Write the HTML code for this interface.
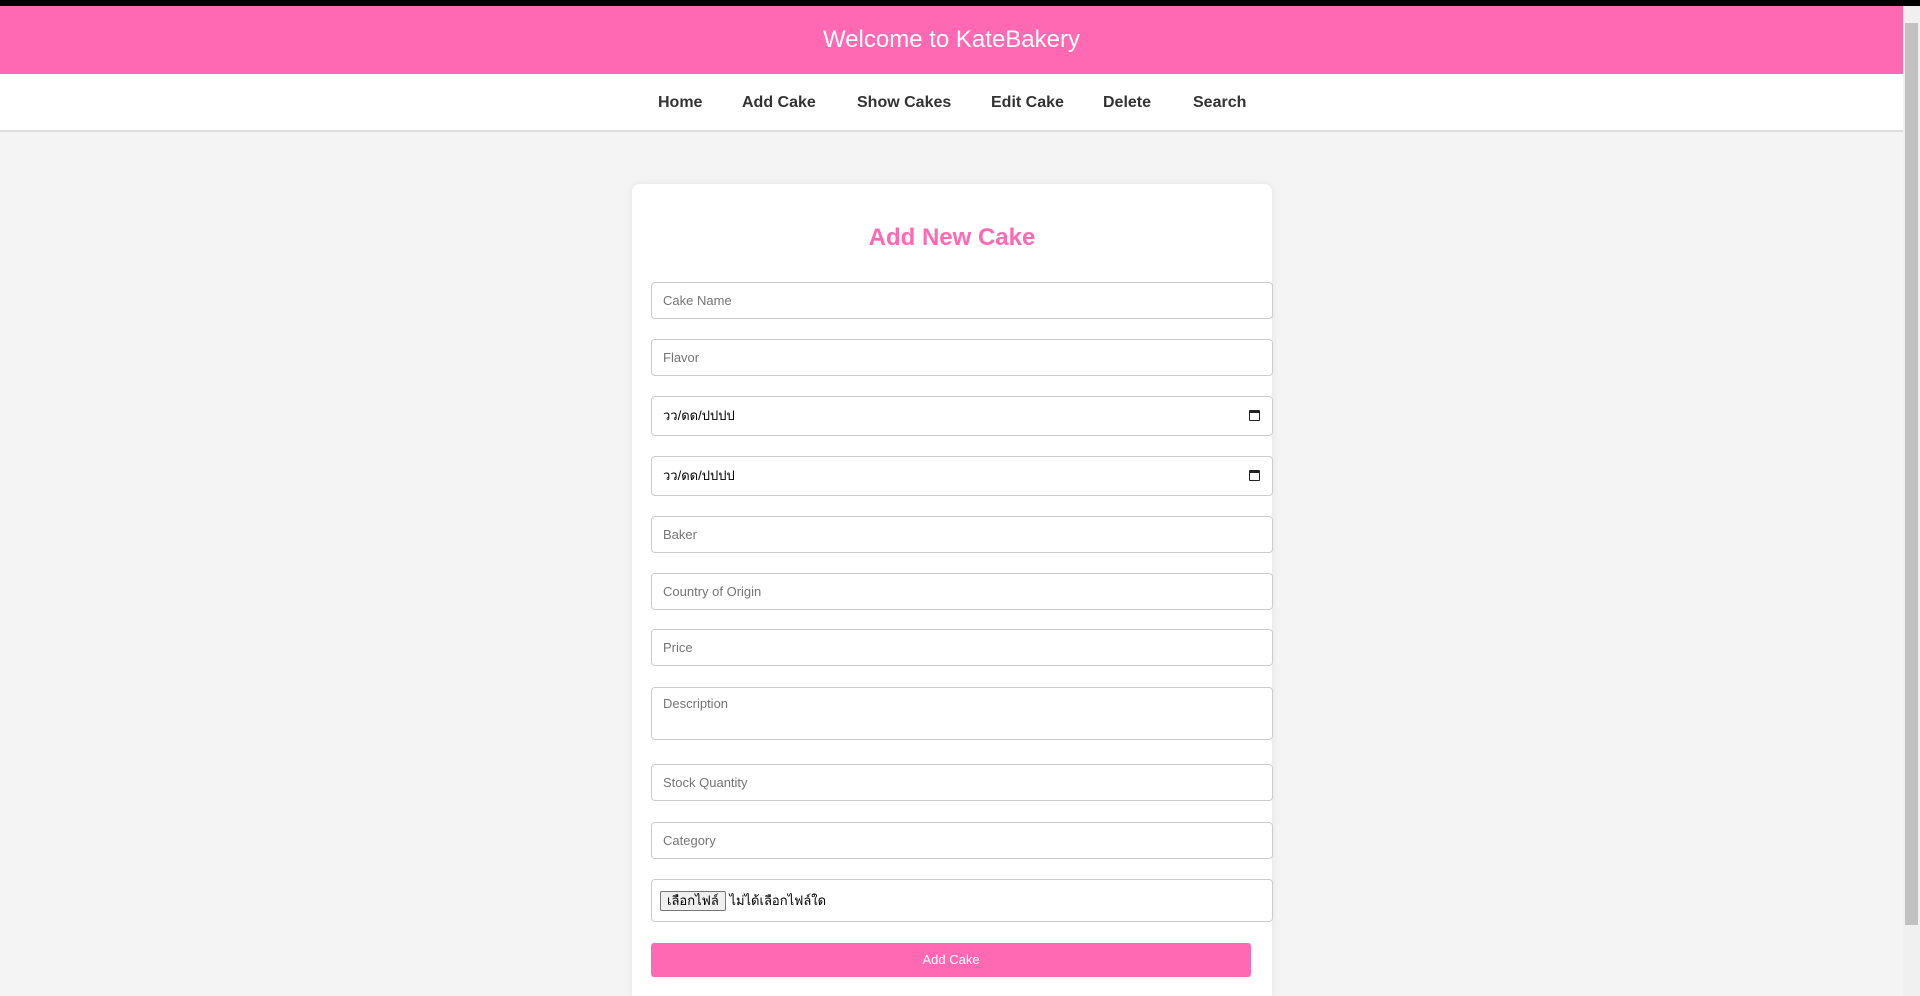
<!DOCTYPE html>
<html><head><meta charset="utf-8"><style>
*{box-sizing:border-box;margin:0;padding:0}
html{width:1920px;height:996px;overflow:hidden}
body{width:1920px;height:996px;overflow:hidden;background:#f4f4f4;font-family:"Liberation Sans",Arial,sans-serif;position:relative}
.black{position:absolute;left:0;top:0;width:1920px;height:6px;background:#000}
.hdr{position:absolute;left:0;top:6px;width:1903px;height:68px;background:#ff69b4;color:#fff;font-size:24px;text-align:center;line-height:68px}
.nav{position:absolute;left:0;top:74px;width:1903px;height:58px;background:#fff;border-bottom:2px solid #ddd}
.nav span{position:absolute;top:20px;font-size:16px;font-weight:bold;color:#333}
.card{position:absolute;left:632px;top:184px;width:640px;height:812px;background:#fff;border-radius:8px 8px 0 0;box-shadow:0 0 8px rgba(0,0,0,.08)}
h2{position:absolute;left:632px;width:640px;top:224px;text-align:center;color:#ff69b4;font-size:24px;font-weight:bold}
.in{position:absolute;left:651px;width:622px;height:37px;border:1px solid #ccc;border-radius:4px;background:#fff;font-size:13px;color:#757575;padding-left:11px;line-height:35px}
.date{color:#000;font-family:"Liberation Sans","Noto Sans CJK SC",sans-serif}
.cal{position:absolute;right:12px;top:13px;width:11px;height:11px;border:1.5px solid #222;border-top-width:3px;border-radius:1px}
.btn{position:absolute;left:651px;top:943px;width:600px;height:34px;background:#ff69b4;border-radius:3px;color:#fff;font-size:13px;text-align:center;line-height:34px}
.fb{display:inline-block;border:1px solid #767676;background:#efefef;border-radius:2px;color:#000;padding:0 6px;line-height:18px;font-size:13px;margin-left:-2px}
.sb{position:absolute;left:1903px;top:6px;width:17px;height:990px;background:#f0f0f0}
.th{position:absolute;left:1905px;top:23px;width:13px;height:902px;background:#c1c1c1}
</style></head><body>
<div class="black"></div>
<div class="hdr">Welcome to KateBakery</div>
<div class="nav">
<span style="left:658px">Home</span>
<span style="left:742px">Add Cake</span>
<span style="left:857px">Show Cakes</span>
<span style="left:991px">Edit Cake</span>
<span style="left:1103px">Delete</span>
<span style="left:1193px">Search</span>
</div>
<div class="card"></div>
<h2>Add New Cake</h2>
<div class="in" style="top:282px">Cake Name</div>
<div class="in" style="top:339px">Flavor</div>
<div class="in date" style="top:396px;height:40px;line-height:38px">วว/ดด/ปปปป<div class="cal"></div></div>
<div class="in date" style="top:456px;height:40px;line-height:38px">วว/ดด/ปปปป<div class="cal"></div></div>
<div class="in" style="top:516px">Baker</div>
<div class="in" style="top:573px">Country of Origin</div>
<div class="in" style="top:629px">Price</div>
<div class="in" style="top:687px;height:53px;line-height:32px">Description</div>
<div class="in" style="top:764px">Stock Quantity</div>
<div class="in" style="top:822px">Category</div>
<div class="in date" style="top:879px;height:43px;line-height:41px;padding-left:10px;font-family:'Liberation Sans','Noto Sans CJK SC',sans-serif"><span class="fb">เลือกไฟล์</span> ไม่ได้เลือกไฟล์ใด</div>
<div class="btn">Add Cake</div>
<div class="sb"></div><div class="th"></div>
</body></html>
